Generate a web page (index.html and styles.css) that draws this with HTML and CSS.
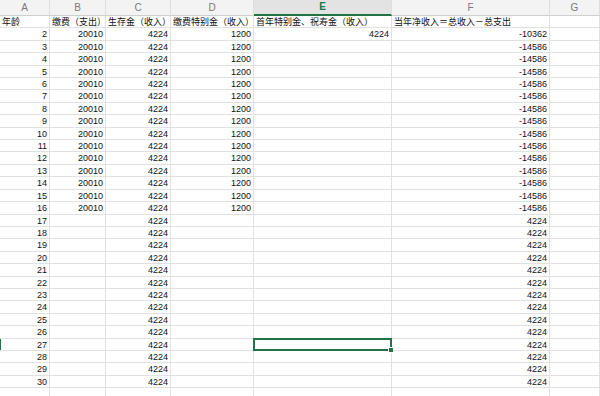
FILE: index.html
```html
<!DOCTYPE html>
<html lang="zh">
<head>
<meta charset="utf-8">
<title>Sheet</title>
<link rel="stylesheet" href="styles.css">
</head>
<body>
<div class="sheet">
  <div class="ch">A</div><div class="ch">B</div><div class="ch">C</div><div class="ch">D</div><div class="ch cur">E</div><div class="ch">F</div><div class="ch">G</div>

  <div class="c">年龄</div><div class="c">缴费（支出）</div><div class="c">生存金（收入）</div><div class="c">缴费特别金（收入）</div><div class="c">首年特别金、祝寿金（收入）</div><div class="c">当年净收入＝总收入－总支出</div><div class="c"></div>

  <div class="c n">2</div><div class="c n">20010</div><div class="c n">4224</div><div class="c n">1200</div><div class="c n">4224</div><div class="c n">-10362</div><div class="c"></div>
  <div class="c n">3</div><div class="c n">20010</div><div class="c n">4224</div><div class="c n">1200</div><div class="c"></div><div class="c n">-14586</div><div class="c"></div>
  <div class="c n">4</div><div class="c n">20010</div><div class="c n">4224</div><div class="c n">1200</div><div class="c"></div><div class="c n">-14586</div><div class="c"></div>
  <div class="c n">5</div><div class="c n">20010</div><div class="c n">4224</div><div class="c n">1200</div><div class="c"></div><div class="c n">-14586</div><div class="c"></div>
  <div class="c n">6</div><div class="c n">20010</div><div class="c n">4224</div><div class="c n">1200</div><div class="c"></div><div class="c n">-14586</div><div class="c"></div>
  <div class="c n">7</div><div class="c n">20010</div><div class="c n">4224</div><div class="c n">1200</div><div class="c"></div><div class="c n">-14586</div><div class="c"></div>
  <div class="c n">8</div><div class="c n">20010</div><div class="c n">4224</div><div class="c n">1200</div><div class="c"></div><div class="c n">-14586</div><div class="c"></div>
  <div class="c n">9</div><div class="c n">20010</div><div class="c n">4224</div><div class="c n">1200</div><div class="c"></div><div class="c n">-14586</div><div class="c"></div>
  <div class="c n">10</div><div class="c n">20010</div><div class="c n">4224</div><div class="c n">1200</div><div class="c"></div><div class="c n">-14586</div><div class="c"></div>
  <div class="c n">11</div><div class="c n">20010</div><div class="c n">4224</div><div class="c n">1200</div><div class="c"></div><div class="c n">-14586</div><div class="c"></div>
  <div class="c n">12</div><div class="c n">20010</div><div class="c n">4224</div><div class="c n">1200</div><div class="c"></div><div class="c n">-14586</div><div class="c"></div>
  <div class="c n">13</div><div class="c n">20010</div><div class="c n">4224</div><div class="c n">1200</div><div class="c"></div><div class="c n">-14586</div><div class="c"></div>
  <div class="c n">14</div><div class="c n">20010</div><div class="c n">4224</div><div class="c n">1200</div><div class="c"></div><div class="c n">-14586</div><div class="c"></div>
  <div class="c n">15</div><div class="c n">20010</div><div class="c n">4224</div><div class="c n">1200</div><div class="c"></div><div class="c n">-14586</div><div class="c"></div>
  <div class="c n">16</div><div class="c n">20010</div><div class="c n">4224</div><div class="c n">1200</div><div class="c"></div><div class="c n">-14586</div><div class="c"></div>
  <div class="c n">17</div><div class="c"></div><div class="c n">4224</div><div class="c"></div><div class="c"></div><div class="c n">4224</div><div class="c"></div>
  <div class="c n">18</div><div class="c"></div><div class="c n">4224</div><div class="c"></div><div class="c"></div><div class="c n">4224</div><div class="c"></div>
  <div class="c n">19</div><div class="c"></div><div class="c n">4224</div><div class="c"></div><div class="c"></div><div class="c n">4224</div><div class="c"></div>
  <div class="c n">20</div><div class="c"></div><div class="c n">4224</div><div class="c"></div><div class="c"></div><div class="c n">4224</div><div class="c"></div>
  <div class="c n">21</div><div class="c"></div><div class="c n">4224</div><div class="c"></div><div class="c"></div><div class="c n">4224</div><div class="c"></div>
  <div class="c n">22</div><div class="c"></div><div class="c n">4224</div><div class="c"></div><div class="c"></div><div class="c n">4224</div><div class="c"></div>
  <div class="c n">23</div><div class="c"></div><div class="c n">4224</div><div class="c"></div><div class="c"></div><div class="c n">4224</div><div class="c"></div>
  <div class="c n">24</div><div class="c"></div><div class="c n">4224</div><div class="c"></div><div class="c"></div><div class="c n">4224</div><div class="c"></div>
  <div class="c n">25</div><div class="c"></div><div class="c n">4224</div><div class="c"></div><div class="c"></div><div class="c n">4224</div><div class="c"></div>
  <div class="c n">26</div><div class="c"></div><div class="c n">4224</div><div class="c"></div><div class="c"></div><div class="c n">4224</div><div class="c"></div>
  <div class="c n rowsel">27</div><div class="c"></div><div class="c n">4224</div><div class="c"></div><div class="c sel"></div><div class="c n">4224</div><div class="c"></div>
  <div class="c n">28</div><div class="c"></div><div class="c n">4224</div><div class="c"></div><div class="c"></div><div class="c n">4224</div><div class="c"></div>
  <div class="c n">29</div><div class="c"></div><div class="c n">4224</div><div class="c"></div><div class="c"></div><div class="c n">4224</div><div class="c"></div>
  <div class="c n">30</div><div class="c"></div><div class="c n">4224</div><div class="c"></div><div class="c"></div><div class="c n">4224</div><div class="c"></div>
  <div class="c"></div><div class="c"></div><div class="c"></div><div class="c"></div><div class="c"></div><div class="c"></div><div class="c"></div>
</div>
</body>
</html>
```

FILE: styles.css
```css
html, body {
  margin: 0;
  padding: 0;
  background: #ffffff;
  overflow: hidden;
  width: 600px;
  height: 396px;
}

.sheet {
  display: grid;
  grid-template-columns: 50px 56px 65px 83px 138px 158px 50px;
  grid-template-rows: 16px;
  grid-auto-rows: 12.42px;
  font-family: "Liberation Sans", "Noto Sans CJK SC", sans-serif;
  font-size: 9px;
  color: #111111;
}

.ch {
  box-sizing: border-box;
  background: #f3f3f3;
  border-right: 1px solid #dedede;
  border-bottom: 1px solid #cfcfcf;
  color: #7a7a7a;
  font-size: 10px;
  text-align: center;
  line-height: 15px;
}

.ch.cur {
  background: #e3e3e3;
  color: #217346;
  font-weight: bold;
  border-bottom: 2px solid #217346;
  line-height: 14px;
}

.c {
  box-sizing: border-box;
  border-right: 1px solid #e1e1e1;
  border-bottom: 1px solid #e1e1e1;
  padding: 0 2px;
  white-space: nowrap;
  overflow: hidden;
  line-height: 12px;
  text-align: left;
}

.c.n {
  text-align: right;
  padding-right: 2px;
}

.rowsel {
  box-shadow: inset 1px 0 0 #217346;
}

.sel {
  position: relative;
  overflow: visible;
}

.sel::after {
  content: "";
  position: absolute;
  top: -1px;
  left: -1px;
  right: -1px;
  bottom: -1px;
  border: 2px solid #217346;
}

.sel::before {
  content: "";
  position: absolute;
  right: -3px;
  bottom: -3px;
  width: 4px;
  height: 4px;
  background: #217346;
  border: 1px solid #ffffff;
  z-index: 2;
}
```
